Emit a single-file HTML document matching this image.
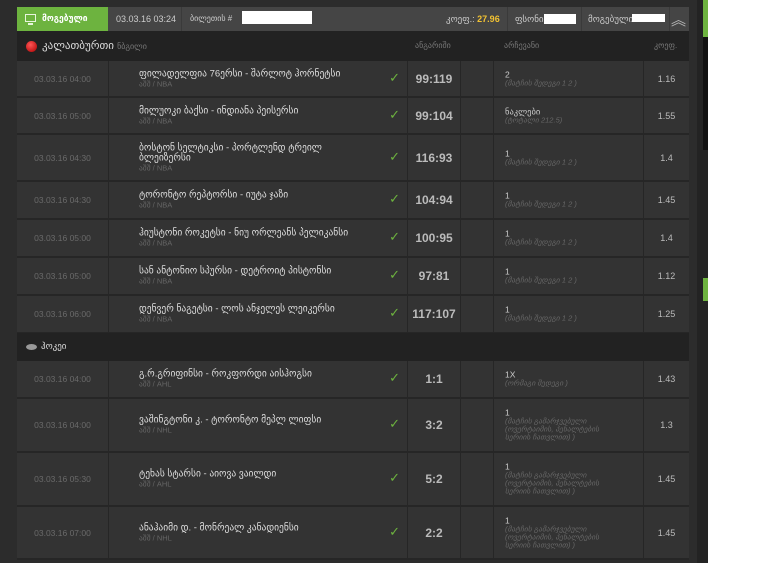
<!DOCTYPE html>
<html><head><meta charset="utf-8"><style>
*{margin:0;padding:0;box-sizing:border-box}
body{width:771px;height:563px;background:#fff;position:relative;overflow:hidden;font-family:"Liberation Sans","DejaVu Sans",sans-serif}
#bg{position:absolute;left:0;top:0;width:697px;height:563px;background:#2c2c2c}
#strip{position:absolute;left:697px;top:0;width:11px;height:563px;background:#232323}
.g{position:absolute;left:703px;width:5px;background:#6db33f}
#frame{position:absolute;left:17px;top:7px;width:672px;height:553px;background:#262626}
.hdr{position:absolute;left:17px;top:7px;width:672px;height:24px;background:#454545;color:#ccc;font-size:9px}
.hdr span{position:absolute;top:7px}
.sep{position:absolute;top:0;width:1px;height:24px;background:#3a3a3a}
.sport{position:absolute;left:17px;width:672px;background:#222;color:#ddd;font-size:11px}
.row{position:absolute;left:17px;width:672px;background:#262626}
.c{position:absolute;top:0;bottom:0;background:#333;border-right:1px solid #262626}
.date{left:0;width:92px;color:#6a6a6a;font-size:8.5px;display:flex;align-items:center;justify-content:center}
.name{left:92px;width:299px}
.score{left:391px;width:53px;color:#bbb;font-weight:bold;font-size:12px;display:flex;align-items:center;justify-content:center}
.emp{left:444px;width:33px}
.ch{left:477px;width:150px}
.k{left:627px;width:45px;color:#bbb;font-size:9px;display:flex;align-items:center;justify-content:center;border-right:none}
.inner{position:absolute;left:30px;right:30px;top:50%;transform:translateY(-50%);color:#ddd;font-size:9.5px;line-height:10px;white-space:nowrap}
.sub{color:#666;font-size:7.5px;line-height:9px}
.chk{position:absolute;right:7px;top:50%;margin-top:-9px;color:#6db33f;font-size:13px;font-weight:bold;line-height:16px}
.ci{position:absolute;left:11px;right:34px;top:50%;transform:translateY(-50%);color:#ccc;font-size:8.5px;line-height:9px}
.ci i{color:#666;font-size:7.5px;line-height:8px;display:block}
</style></head><body>
<div id="bg"></div><div id="strip"></div>
<div class="g" style="top:0;height:37px"></div>
<div style="position:absolute;left:703px;top:37px;width:5px;height:113px;background:#111"></div>
<div class="g" style="top:278px;height:23px"></div>
<div id="frame"></div>
<div class="hdr">
 <div style="position:absolute;left:0;top:0;width:91px;height:24px;background:#6db33f"></div>
 <div style="position:absolute;left:8px;top:7px;width:11px;height:8px;border:1.5px solid #e8f5dd"></div>
 <div style="position:absolute;left:11px;top:16px;width:5px;height:2px;background:#e8f5dd"></div>
 <span style="left:25px;color:#fff;font-weight:bold;font-family:'DejaVu Sans',sans-serif;font-size:8.5px">მოგებული</span>
 <span style="left:99px">03.03.16 03:24</span>
 <div class="sep" style="left:164px"></div>
 <span style="left:173px;font-size:8px">ბილეთის #</span>
 <div style="position:absolute;left:225px;top:4px;width:70px;height:13px;background:#fff"></div>
 <span style="left:429px">კოეფ.: <b style="color:#f2c232">27.96</b></span>
 <div class="sep" style="left:490px"></div>
 <span style="left:498px">ფსონი</span>
 <div style="position:absolute;left:527px;top:7px;width:32px;height:10px;background:#fff"></div>
 <div class="sep" style="left:564px"></div>
 <span style="left:571px">მოგებული</span>
 <div style="position:absolute;left:615px;top:7px;width:33px;height:8px;background:#fff"></div>
 <div class="sep" style="left:652px"></div>
 <span style="left:654px;top:2px;font-size:15px;color:#bbb">︽</span>
</div>
<div class="sport" style="top:31px;height:30px">
 <div style="position:absolute;left:9px;top:10px;width:11px;height:11px;border-radius:50%;background:radial-gradient(circle at 40% 35%,#f55,#a00)"></div>
 <span style="position:absolute;left:25px;top:8px">კალათბურთი <span style="color:#777;font-size:8px">ნბგილი</span></span>
 <span style="position:absolute;left:398px;top:10px;color:#777;font-size:8px">ანგარიში</span>
 <span style="position:absolute;left:487px;top:10px;color:#777;font-size:8px">არჩევანი</span>
 <span style="position:absolute;left:637px;top:10px;color:#777;font-size:8px">კოეფ.</span>
</div>

<div class="row" style="top:61px;height:35px"><div class="c date">03.03.16 04:00</div><div class="c name"><div class="inner">ფილადელფია 76ერსი - შარლოტ ჰორნეტსი<div class="sub">აშშ / NBA</div></div><span class="chk">✓</span></div><div class="c score">99:119</div><div class="c emp"></div><div class="c ch"><div class="ci">2<i>(მატჩის შედეგი 1 2 )</i></div></div><div class="c k">1.16</div></div>
<div class="row" style="top:98px;height:35px"><div class="c date">03.03.16 05:00</div><div class="c name"><div class="inner">მილუოკი ბაქსი - ინდიანა პეისერსი<div class="sub">აშშ / NBA</div></div><span class="chk">✓</span></div><div class="c score">99:104</div><div class="c emp"></div><div class="c ch"><div class="ci">ნაკლები<i>(ტოტალი 212.5)</i></div></div><div class="c k">1.55</div></div>
<div class="row" style="top:135px;height:45px"><div class="c date">03.03.16 04:30</div><div class="c name"><div class="inner">ბოსტონ სელტიკსი - პორტლენდ ტრეილ<br>ბლეიზერსი<div class="sub">აშშ / NBA</div></div><span class="chk">✓</span></div><div class="c score">116:93</div><div class="c emp"></div><div class="c ch"><div class="ci">1<i>(მატჩის შედეგი 1 2 )</i></div></div><div class="c k">1.4</div></div>
<div class="row" style="top:182px;height:36px"><div class="c date">03.03.16 04:30</div><div class="c name"><div class="inner">ტორონტო რეპტორსი - იუტა ჯაზი<div class="sub">აშშ / NBA</div></div><span class="chk">✓</span></div><div class="c score">104:94</div><div class="c emp"></div><div class="c ch"><div class="ci">1<i>(მატჩის შედეგი 1 2 )</i></div></div><div class="c k">1.45</div></div>
<div class="row" style="top:220px;height:36px"><div class="c date">03.03.16 05:00</div><div class="c name"><div class="inner">ჰიუსტონი როკეტსი - ნიუ ორლეანს პელიკანსი<div class="sub">აშშ / NBA</div></div><span class="chk">✓</span></div><div class="c score">100:95</div><div class="c emp"></div><div class="c ch"><div class="ci">1<i>(მატჩის შედეგი 1 2 )</i></div></div><div class="c k">1.4</div></div>
<div class="row" style="top:258px;height:36px"><div class="c date">03.03.16 05:00</div><div class="c name"><div class="inner">სან ანტონიო სპურსი - დეტროიტ პისტონსი<div class="sub">აშშ / NBA</div></div><span class="chk">✓</span></div><div class="c score">97:81</div><div class="c emp"></div><div class="c ch"><div class="ci">1<i>(მატჩის შედეგი 1 2 )</i></div></div><div class="c k">1.12</div></div>
<div class="row" style="top:296px;height:36px"><div class="c date">03.03.16 06:00</div><div class="c name"><div class="inner">დენვერ ნაგეტსი - ლოს ანჯელეს ლეიკერსი<div class="sub">აშშ / NBA</div></div><span class="chk">✓</span></div><div class="c score">117:107</div><div class="c emp"></div><div class="c ch"><div class="ci">1<i>(მატჩის შედეგი 1 2 )</i></div></div><div class="c k">1.25</div></div>

<div class="sport" style="top:333px;height:28px">
 <div style="position:absolute;left:9px;top:11px;width:11px;height:6px;border-radius:50%;background:#999"></div>
 <span style="position:absolute;left:24px;top:8px;font-size:9px">ჰოკეი</span>
</div>

<div class="row" style="top:361px;height:36px"><div class="c date">03.03.16 04:00</div><div class="c name"><div class="inner">გ.რ.გრიფინსი - როკფორდი აისჰოგსი<div class="sub">აშშ / AHL</div></div><span class="chk">✓</span></div><div class="c score">1:1</div><div class="c emp"></div><div class="c ch"><div class="ci">1X<i>(ორმაგი შედეგი )</i></div></div><div class="c k">1.43</div></div>
<div class="row" style="top:399px;height:52px"><div class="c date">03.03.16 04:00</div><div class="c name"><div class="inner">ვაშინგტონი კ. - ტორონტო მეპლ ლიფსი<div class="sub">აშშ / NHL</div></div><span class="chk">✓</span></div><div class="c score">3:2</div><div class="c emp"></div><div class="c ch"><div class="ci">1<i>(მატჩის გამარჯვებული (ოვერტაიმის, პენალტების სერიის ჩათვლით) )</i></div></div><div class="c k">1.3</div></div>
<div class="row" style="top:453px;height:52px"><div class="c date">03.03.16 05:30</div><div class="c name"><div class="inner">ტეხას სტარსი - აიოვა ვაილდი<div class="sub">აშშ / AHL</div></div><span class="chk">✓</span></div><div class="c score">5:2</div><div class="c emp"></div><div class="c ch"><div class="ci">1<i>(მატჩის გამარჯვებული (ოვერტაიმის, პენალტების სერიის ჩათვლით) )</i></div></div><div class="c k">1.45</div></div>
<div class="row" style="top:507px;height:51px"><div class="c date">03.03.16 07:00</div><div class="c name"><div class="inner">ანაჰაიმი დ. - მონრეალ კანადიენსი<div class="sub">აშშ / NHL</div></div><span class="chk">✓</span></div><div class="c score">2:2</div><div class="c emp"></div><div class="c ch"><div class="ci">1<i>(მატჩის გამარჯვებული (ოვერტაიმის, პენალტების სერიის ჩათვლით) )</i></div></div><div class="c k">1.45</div></div>
</body></html>
